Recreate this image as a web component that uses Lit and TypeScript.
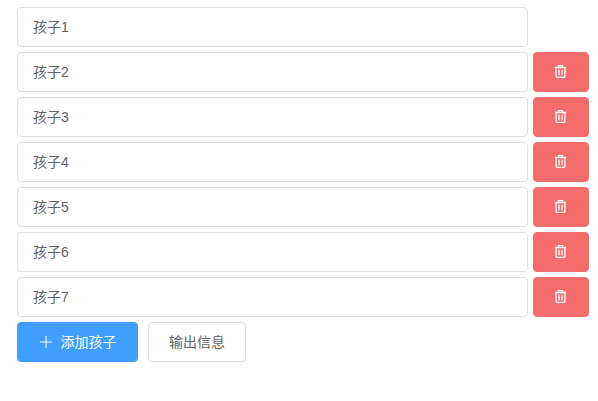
import { LitElement, html, css, svg } from "lit";
import { customElement } from "lit/decorators.js";

const trash = html`<svg class="icon" viewBox="0.5 0.5 14 14" width="14" height="14" fill="none" stroke="currentColor" stroke-width="1.3">
  ${svg`<path d="M1.4 3h11.2M5 3V1.2h4V3M2.6 3v9c0 .5.3.8.8.8h7.2c.5 0 .8-.3.8-.8V3M5.5 5.2v5.6M8.5 5.2v5.6"/>`}
</svg>`;

@customElement("app-root")
export class AppRoot extends LitElement {
  static styles = css`
    :host {
      display: block;
      font-family: "Liberation Sans", "Noto Sans CJK SC", sans-serif;
      font-size: 14px;
      color: #606266;
    }
    .page {
      display: flex;
      flex-direction: column;
      gap: 5px;
      padding: 7px 9px 0 17px;
    }
    .row {
      display: grid;
      grid-template-columns: 511px 56px;
      gap: 5px;
      height: 40px;
    }
    .input {
      box-sizing: border-box;
      height: 40px;
      border: 1px solid #dcdfe6;
      border-radius: 4px;
      padding: 0 15px;
      line-height: 38px;
      background: #fff;
    }
    button {
      box-sizing: border-box;
      height: 40px;
      border-radius: 4px;
      font: inherit;
      line-height: 1;
      padding: 0;
      display: flex;
      align-items: center;
      justify-content: center;
    }
    .del {
      background: #f56c6c;
      border: 1px solid #f56c6c;
      color: #fff;
    }
    .actions {
      display: flex;
      gap: 10px;
    }
    .add {
      width: 121px;
      background: #409eff;
      border: 1px solid #409eff;
      color: #fff;
      gap: 8px;
    }
    .out {
      width: 98px;
      background: #fff;
      border: 1px solid #dcdfe6;
      color: #606266;
    }
    .icon {
      display: block;
    }
  `;

  render() {
    const kids = ["孩子1", "孩子2", "孩子3", "孩子4", "孩子5", "孩子6", "孩子7"];
    return html`<div class="page">
      ${kids.map(
        (k, i) => html`<div class="row">
          <div class="input">${k}</div>
          ${i > 0 ? html`<button class="del">${trash}</button>` : ""}
        </div>`
      )}
      <div class="actions">
        <button class="add">
          <svg class="icon" viewBox="0 0 14 14" width="14" height="14" stroke="currentColor" stroke-width="1.1" fill="none">
            <path d="M7 1v12M1 7h12" />
          </svg>
          <span>添加孩子</span>
        </button>
        <button class="out">输出信息</button>
      </div>
    </div>`;
  }
}
